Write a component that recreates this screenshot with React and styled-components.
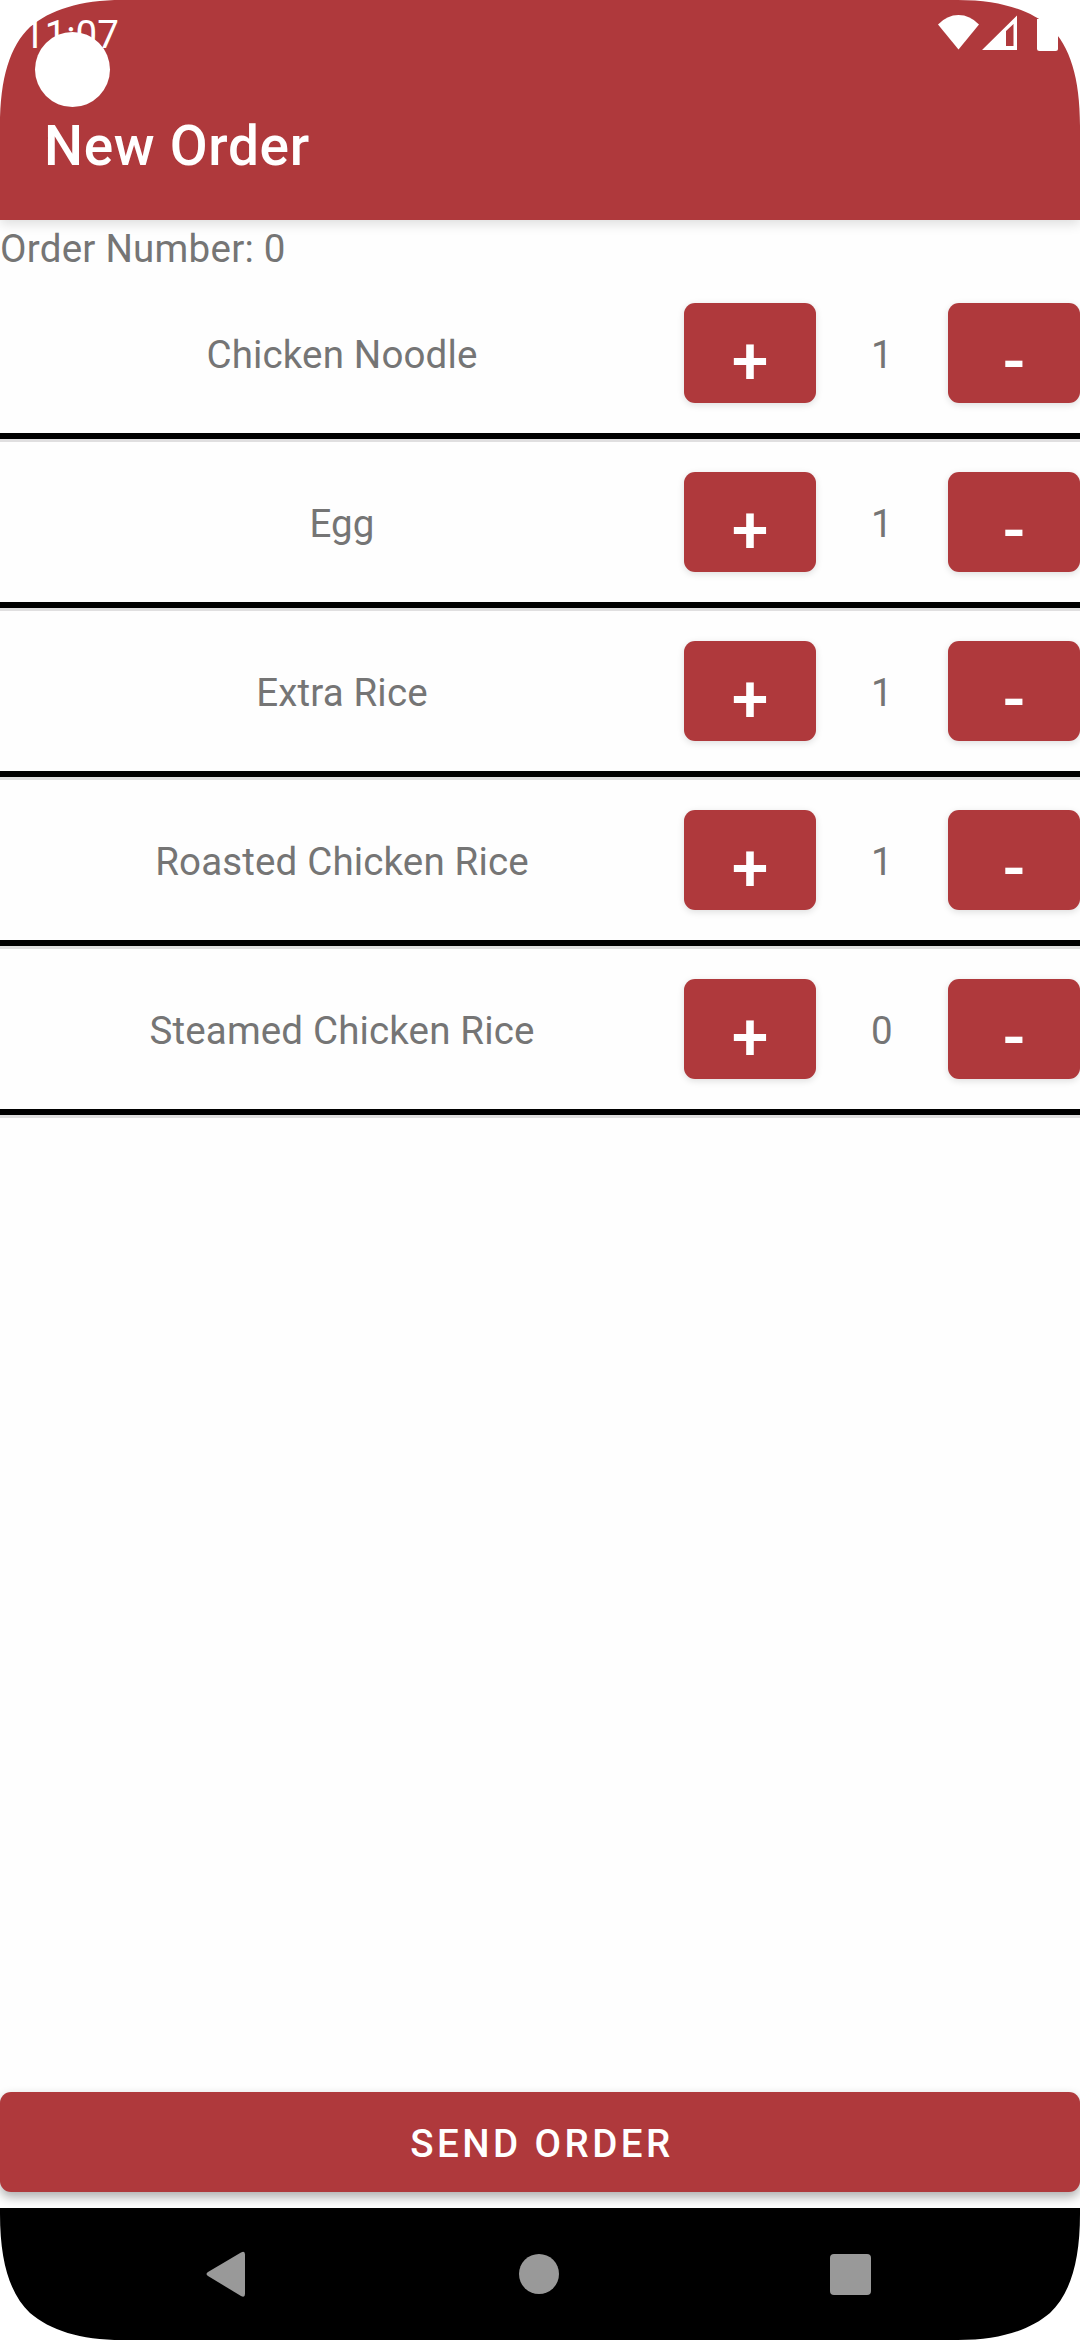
import React, { useState } from "react";
import styled, { createGlobalStyle, css } from "styled-components";

const red = "#af393c";
const grey = "#757575";

const GlobalStyle = createGlobalStyle`
  *, *::before, *::after { box-sizing: border-box; }
  body { margin: 0; background: #fff; }
`;

const Screen = styled.div`
  position: relative;
  display: flex;
  flex-direction: column;
  width: 1080px;
  height: 2340px;
  overflow: hidden;
  background: #fefefe;
  color: ${grey};
  font-family: Roboto, "Liberation Sans", sans-serif;
  font-size: 38.5px;
  letter-spacing: 0.15px;
  line-height: 45px;
`;

const Header = styled.header`
  flex: none;
  display: flex;
  flex-direction: column;
  height: 220px;
  background: ${red};
  color: #fff;
  box-shadow: 0 4px 11px rgba(0, 0, 0, 0.13);
  z-index: 1;
`;

const StatusBar = styled.div`
  display: flex;
  justify-content: space-between;
  height: 66px;
  padding: 11px 22px 0 23px;
`;

const Clock = styled.span`
  padding-top: 1px;
  font-size: 38.5px;
  letter-spacing: 0;
  line-height: 45px;
`;

const StatusIcons = styled.svg`
  display: block;
  width: 130px;
  height: 48px;
`;

const Title = styled.h1`
  margin: 0;
  padding: 47px 0 0 44px;
  font-size: 55px;
  font-weight: 500;
  letter-spacing: 0.0125em;
  line-height: 66px;
`;

const Main = styled.main`
  flex: 1;
  display: flex;
  flex-direction: column;
`;

const OrderNumber = styled.p`
  margin: 0;
  padding-top: 6px;
  height: 53px;
  letter-spacing: 0.25px;
`;

const List = styled.ul`
  flex: 1;
  margin: 0;
  padding: 0;
  list-style: none;
`;

const Item = styled.li`
  display: grid;
  grid-template-columns: 684px 132px 132px 132px;
  align-items: center;
  height: 169px;
  padding: 13px 0 19px;
  border-bottom: 3px solid #e0dfe0;
  box-shadow: inset 0 -6px 0 #000;
  text-align: center;
`;

const ItemText = styled.span`
  padding-top: 3px;
`;

const raised = css`
  border: 0;
  padding: 0;
  border-radius: 11px;
  background: ${red};
  color: #fff;
  font-family: inherit;
  font-weight: 500;
`;

const StepButton = styled.button`
  ${raised}
  height: 100px;
  box-shadow: 0 2px 7px rgba(0, 0, 0, 0.13);
  font-size: 66px;
  line-height: 78px;
  padding-top: 17px;
`;

const SendButton = styled.button`
  ${raised}
  flex: none;
  width: 100%;
  height: 100px;
  margin-bottom: 16px;
  padding: 2px 0 0 4px;
  box-shadow: 0 5px 11px rgba(0, 0, 0, 0.32);
  font-size: 38.5px;
  letter-spacing: 0.0893em;
  text-transform: uppercase;
`;

const NavBar = styled.nav`
  position: relative;
  flex: none;
  display: flex;
  align-items: center;
  justify-content: space-between;
  height: 132px;
  padding: 0 208px 0 205px;
  background: #000;
`;

const NavIcon = styled.svg`
  display: block;
  width: 42px;
  height: 46px;
  fill: #999;
`;

const Camera = styled.div`
  position: absolute;
  top: 32px;
  left: 35px;
  width: 75px;
  height: 75px;
  border-radius: 50%;
  background: #fff;
  z-index: 2;
`;

const CornerShape = styled.svg`
  position: absolute;
  ${(p) => p.$v}: 0;
  ${(p) => p.$h}: 0;
  width: 132px;
  height: 132px;
  transform: scale(${(p) => (p.$h === "right" ? -1 : 1)}, ${(p) => (p.$v === "bottom" ? -1 : 1)});
  fill: #fff;
  z-index: 3;
`;

const Corner = ({ v, h }) => (
  <CornerShape $v={v} $h={h} viewBox="0 0 132 132" aria-hidden="true">
    <path d="M0 0H122C80 0 50 10 30 27C10 46 0 78 0 126Z" />
  </CornerShape>
);

const initialItems = [
  { name: "Chicken Noodle", count: 1 },
  { name: "Egg", count: 1 },
  { name: "Extra Rice", count: 1 },
  { name: "Roasted Chicken Rice", count: 1 },
  { name: "Steamed Chicken Rice", count: 0 },
];

export default function App() {
  const [items, setItems] = useState(initialItems);
  const change = (name, delta) =>
    setItems((list) =>
      list.map((i) => (i.name === name ? { ...i, count: Math.max(0, i.count + delta) } : i))
    );

  return (
    <>
      <GlobalStyle />
      <Screen>
        <Header>
          <StatusBar>
            <Clock>11:07</Clock>
            <StatusIcons viewBox="928 11 130 48" fill="#fff" aria-hidden="true">
              <path d="M938 24.5Q947 15 958.500 15T979 24.500L958.500 49.500Z" />
              <path fillRule="evenodd" d="M982 50L1017 15.500V50ZM1006 31V46H1013.500V24Z" />
              <path d="M1037 19H1058V48.500Q1058 51 1055.500 51H1039.500Q1037 51 1037 48.500Z" />
            </StatusIcons>
          </StatusBar>
          <Title>New Order</Title>
        </Header>
        <Main>
          <OrderNumber>Order Number: 0</OrderNumber>
          <List>
            {items.map((item) => (
              <Item key={item.name}>
                <ItemText>{item.name}</ItemText>
                <StepButton onClick={() => change(item.name, 1)}>+</StepButton>
                <ItemText>{item.count}</ItemText>
                <StepButton onClick={() => change(item.name, -1)}>-</StepButton>
              </Item>
            ))}
          </List>
          <SendButton>Send Order</SendButton>
        </Main>
        <NavBar>
          <NavIcon viewBox="0 0 42 46">
            <path d="M36 1.500Q40 -0.500 40 3.500V43Q40 47 36 45L3 25Q0 23 3 21Z" />
          </NavIcon>
          <NavIcon viewBox="0 0 42 46">
            <circle cx="21" cy="23" r="20" />
          </NavIcon>
          <NavIcon viewBox="0 0 42 46">
            <rect x="0" y="3" width="41" height="41" rx="4" />
          </NavIcon>
        </NavBar>
        <Camera />
        <Corner v="top" h="left" />
        <Corner v="top" h="right" />
        <Corner v="bottom" h="left" />
        <Corner v="bottom" h="right" />
      </Screen>
    </>
  );
}
